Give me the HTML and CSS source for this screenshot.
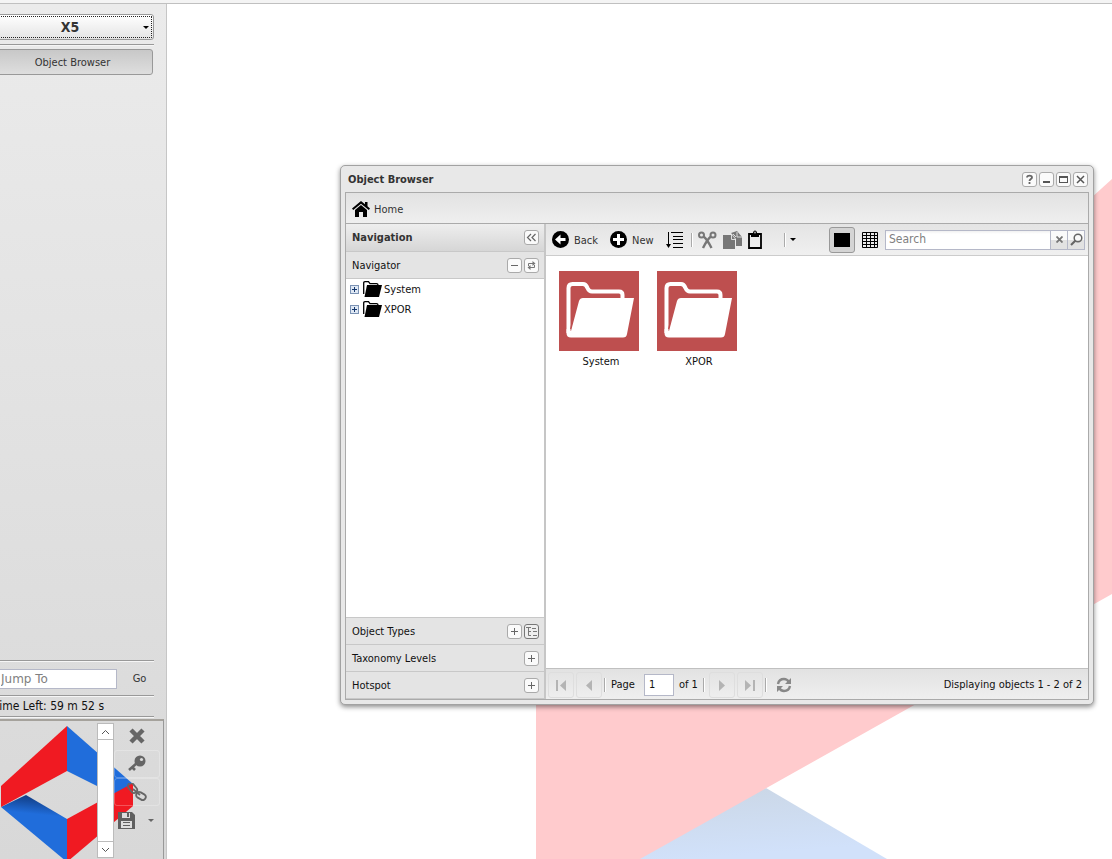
FILE: index.html
```html
<!DOCTYPE html>
<html lang="en">
<head>
<meta charset="utf-8">
<title>Object Browser</title>
<link rel="stylesheet" href="styles.css">
</head>
<body>
<div class="app">
  <header class="topstrip"></header>
  <div class="workspace">
    <aside class="sidebar">
      <button class="combo" type="button"><span class="combo-label">X5</span><span class="caret"></span></button>
      <hr class="rule">
      <button class="task" type="button">Object Browser</button>
      <div class="spacer"></div>
      <hr class="rule">
      <form class="jump">
        <input class="jump-input" type="text" placeholder="Jump To" aria-label="Jump To">
        <button class="go" type="button">Go</button>
      </form>
      <hr class="rule">
      <p class="time">Time Left: 59 m 52 s</p>
      <hr class="rule">
      <section class="dock">
        <svg class="logo" viewBox="-8 0 105 138" width="105" height="138">
          <defs><linearGradient id="fold" x1="0.2" y1="0" x2="0.1" y2="1"><stop offset="0" stop-color="#123f88"/><stop offset=".25" stop-color="#206ddb"/></linearGradient></defs>
          <path fill="#206ddb" d="M67 5 133 63 115 74 67 50z"/>
          <path fill="#f01a22" d="M133 62V85L67 141V98z"/>
          <path fill="url(#fold)" d="M1 86 26 74 67 98V141z"/>
          <path fill="#f01a22" d="M67 5V50L1 86V65z"/>
        </svg>
        <div class="scroll">
          <button class="scroll-btn" type="button" aria-label="Scroll up"><svg width="9" height="6" viewBox="0 0 9 6"><path d="M1 5 4.500 1.500 8 5" fill="none" stroke="#555"/></svg></button>
          <div class="spacer"></div>
          <button class="scroll-btn scroll-down" type="button" aria-label="Scroll down"><svg width="9" height="6" viewBox="0 0 9 6"><path d="M1 1 4.500 4.500 8 1" fill="none" stroke="#555"/></svg></button>
        </div>
        <div class="dock-tools">
          <button class="dock-btn" type="button" aria-label="Close"><svg width="18" height="18" viewBox="0 0 18 18"><path d="M3 3 15 15M15 3 3 15" stroke="#666" stroke-width="4.500"/></svg></button>
          <button class="dock-btn outlined" type="button" aria-label="Key"><svg width="18" height="18" viewBox="0 0 18 18"><circle cx="12" cy="6" r="5.500" fill="#666"/><circle cx="13.500" cy="4.500" r="1.600" fill="#ddd"/><path d="M9 8 1 15M4 12l3 3" stroke="#666" stroke-width="2.600"/></svg></button>
          <button class="dock-btn outlined" type="button" aria-label="Link"><svg width="20" height="18" viewBox="0 0 20 18" fill="none" stroke="#666" stroke-width="1.800"><rect x="0" y="2" width="11" height="6" rx="3" transform="rotate(50 5.500 5)"/><rect x="9" y="10" width="10" height="6" rx="3" transform="rotate(30 14 13)"/><path d="M6 6l7 6"/></svg></button>
          <div class="save-row">
            <button class="save" type="button" aria-label="Save"><svg width="17" height="17" viewBox="0 0 17 17"><path fill="#5f5f5f" d="M0 0H14L17 3V17H0z"/><path fill="#ddd" d="M4 1H12V6H4zM3 9H14V16H3z"/><path fill="#5f5f5f" d="M9 1h2v4H9zM5 10h7v1H5zM5 13h7v1H5z"/></svg></button>
            <span class="caret caret-grey"></span>
          </div>
        </div>
      </section>
    </aside>
    <main class="desktop"></main>
  </div>

  <svg class="wallpaper" viewBox="0 0 1112 859" preserveAspectRatio="xMinYMin slice" aria-hidden="true">
    <defs><linearGradient id="sky" x1="0" y1="0" x2=".3" y2="1"><stop offset="0" stop-color="#cad6e4"/><stop offset="1" stop-color="#d1e1fa"/></linearGradient></defs>
    <path fill="url(#sky)" d="M766 788 887 859H600z"/>
    <path fill="#ffcbcd" d="M536 859V700L1112 179V594L640 859z"/>
  </svg>

  <section class="window" aria-label="Object Browser">
    <header class="titlebar">
      <h1 class="title">Object Browser</h1>
      <button class="tool" type="button" aria-label="Help"><svg width="13" height="13" viewBox="0 0 13 13"><path d="M4 4.500C4 2 9 2 9 4.500 9 6 6.500 6 6.500 8M6.500 9v2" fill="none" stroke="#666" stroke-width="1.800"/></svg></button>
      <button class="tool" type="button" aria-label="Minimize"><svg width="13" height="13" viewBox="0 0 13 13"><path d="M3 8H10V10H3z" fill="#555"/></svg></button>
      <button class="tool" type="button" aria-label="Maximize"><svg width="13" height="13" viewBox="0 0 13 13"><path d="M2 3H11V10H2zM3 5V9H10V5z" fill="#555" fill-rule="evenodd"/></svg></button>
      <button class="tool" type="button" aria-label="Close"><svg width="13" height="13" viewBox="0 0 13 13"><path d="M3 3 10 10M10 3 3 10" stroke="#555" stroke-width="1.500"/></svg></button>
    </header>
    <div class="frame">
      <nav class="homebar">
        <button class="bar-btn" type="button"><svg width="18" height="16" viewBox="0 0 18 16"><path d="M9 0 0 7.500 1.200 9 9 2.800 16.800 9 18 7.500 15.500 5.300V1H13V3.300z"/><path d="M9 4 3 9V16H7V11H11V16H15V9z"/></svg><span>Home</span></button>
      </nav>
      <div class="columns">
        <aside class="nav">
          <header class="nav-head"><h2 class="nav-title">Navigation</h2>
            <button class="tool" type="button" aria-label="Collapse"><svg width="13" height="13" viewBox="0 0 13 13"><path d="M6 3 2.500 6.500 6 10M10.500 3 7 6.500 10.500 10" fill="none" stroke="#666" stroke-width="1.200"/></svg></button></header>
          <div class="section"><span class="section-name">Navigator</span>
            <button class="tool" type="button" aria-label="Collapse section"><svg width="13" height="13" viewBox="0 0 13 13"><path d="M3 6H10V7H3z" fill="#666"/></svg></button>
            <button class="tool" type="button" aria-label="Refresh"><svg width="13" height="13" viewBox="0 0 13 13"><path d="M3.500 7V4.500H9M9.500 6V8.500H4" fill="none" stroke="#777"/><path d="M7.500 2 10.500 4.500 7.500 7zM5.500 6 2.500 8.500 5.500 11z" fill="#777"/></svg></button></div>
          <ul class="tree">
            <li class="node"><button class="expander" type="button" aria-label="Expand System"></button>
              <svg width="19" height="16" viewBox="0 0 19 16"><path d="M.700 13V2Q.700 .700 2 .700H5.500L7 2.700H13.500Q15 2.700 15 4" fill="none" stroke="#000" stroke-width="1.300"/><path d="M4 4H19L16 16H1.500z"/></svg><span>System</span></li>
            <li class="node"><button class="expander" type="button" aria-label="Expand XPOR"></button>
              <svg width="19" height="16" viewBox="0 0 19 16"><path d="M.700 13V2Q.700 .700 2 .700H5.500L7 2.700H13.500Q15 2.700 15 4" fill="none" stroke="#000" stroke-width="1.300"/><path d="M4 4H19L16 16H1.500z"/></svg><span>XPOR</span></li>
          </ul>
          <div class="section"><span class="section-name">Object Types</span>
            <button class="tool" type="button" aria-label="Expand Object Types"><svg width="13" height="13" viewBox="0 0 13 13"><path d="M3 6H6V3H7V6H10V7H7V10H6V7H3z" fill="#666"/></svg></button>
            <button class="tool tool-dark" type="button" aria-label="Tree view"><svg width="13" height="13" viewBox="0 0 13 13"><path d="M1 2.500H6M3.500 2.500V10.500M3.500 6.500H6M3.500 10.500H6M7 3.500H11M8 6.500H12M8 10.500H12" fill="none" stroke="#777"/></svg></button></div>
          <div class="section"><span class="section-name">Taxonomy Levels</span>
            <button class="tool" type="button" aria-label="Expand Taxonomy Levels"><svg width="13" height="13" viewBox="0 0 13 13"><path d="M3 6H6V3H7V6H10V7H7V10H6V7H3z" fill="#666"/></svg></button></div>
          <div class="section"><span class="section-name">Hotspot</span>
            <button class="tool" type="button" aria-label="Expand Hotspot"><svg width="13" height="13" viewBox="0 0 13 13"><path d="M3 6H6V3H7V6H10V7H7V10H6V7H3z" fill="#666"/></svg></button></div>
        </aside>
        <div class="content">
          <div class="toolbar">
            <div class="actions">
              <button class="bar-btn" type="button"><svg width="17" height="17" viewBox="0 0 17 17"><circle cx="8.500" cy="8.500" r="8.500"/><path fill="#fff" d="M3 8.500 8.500 3.500V7H13.500V10H8.500V13.500z"/></svg><span>Back</span></button>
              <button class="bar-btn" type="button"><svg width="17" height="17" viewBox="0 0 17 17"><circle cx="8.500" cy="8.500" r="8.500"/><path fill="#fff" d="M7 3H10V7H14V10H10V14H7V10H3V7H7z"/></svg><span>New</span></button>
              <button class="bar-btn" type="button" aria-label="Sort"><svg width="17" height="18" viewBox="0 0 17 18"><path d="M2 1H3V13H5L2.500 17 0 13H2zM5 1H17V2H5zM7 5H17V6H7zM7 8H17V9H7zM7 12H17V13H7zM7 16H17V17H7z"/></svg></button>
            </div>
            <span class="sep"></span>
            <div class="clip">
              <button class="bar-btn" type="button" aria-label="Cut"><svg width="19" height="18" viewBox="0 0 19 18" fill="none" stroke="#777" stroke-width="2"><ellipse cx="3.500" cy="4" rx="2.500" ry="2.500"/><ellipse cx="15" cy="4" rx="2.500" ry="2.500"/><path d="M5.500 5.500Q9 8 13.500 17M13 5.500Q9.500 8 5 17" stroke-width="2.400"/></svg></button>
              <button class="bar-btn" type="button" aria-label="Copy"><svg width="19" height="18" viewBox="0 0 19 18"><path fill="#777" d="M0 4H9L12 8V18H0z"/><path fill="#777" d="M8 2 14 0 19 6V15H13V8L9 3z"/><path d="M8.500 4V8.500H12M14 1V6H19M10 3l3 3" fill="none" stroke="#ddd"/></svg></button>
              <button class="bar-btn" type="button" aria-label="Paste"><svg width="14" height="19" viewBox="0 0 14 19"><path d="M1 4H13V18H1z" fill="none" stroke="#000" stroke-width="1.800"/><path d="M3 3H5C5-.500 9-.500 9 3H11V7H3z"/><circle cx="7" cy="2.500" r="1" fill="#aaa"/></svg></button>
            </div>
            <span class="sep"></span>
            <span class="caret"></span>
            <div class="spacer"></div>
            <button class="view view-on" type="button" aria-label="Icon view"><svg width="16" height="14" viewBox="0 0 16 14"><path d="M0 0H16V14H0z"/></svg></button>
            <button class="view" type="button" aria-label="Table view"><svg width="16" height="16" viewBox="0 0 16 16"><path d="M.500.500H15.500V15.500H.500zM0 3.500H16M0 6.500H16M0 9.500H16M0 12.500H16M4.500 0V16M8.500 0V16M12.500 0V16" fill="none" stroke="#000"/></svg></button>
            <form class="search">
              <input class="search-input" type="text" placeholder="Search" aria-label="Search">
              <button class="search-btn" type="button" aria-label="Clear"><svg width="7" height="7" viewBox="0 0 7 7"><path d="M.500 .500 6.500 6.500M6.500 .500 .500 6.500" stroke="#777" stroke-width="1.800"/></svg></button>
              <button class="search-btn" type="button" aria-label="Search objects"><svg width="13" height="13" viewBox="0 0 13 13"><circle cx="8" cy="5" r="3.800" fill="none" stroke="#666" stroke-width="1.500"/><path d="M5.500 7.500 1 12" stroke="#666" stroke-width="2.200"/></svg></button>
            </form>
          </div>
          <div class="items">
            <figure class="item"><svg width="80" height="80" viewBox="0 0 80 80"><path fill="#be4f4f" d="M0 0H80V80H0z"/><path d="M9.500 62V17Q9.500 13 13.500 13H24Q27 13 28.500 17 30 20.500 33 20.500H60Q63.500 20.500 63.500 24V28" fill="none" stroke="#fff" stroke-width="4"/><path d="M12 60 20 30Q21 27 24 27H75L68 63Q67.500 66.500 64 66.500H12Q7.500 66.500 7.500 62V58z" fill="#fff"/><path d="M11.500 58 19 27" stroke="#be4f4f"/></svg><figcaption>System</figcaption></figure>
            <figure class="item"><svg width="80" height="80" viewBox="0 0 80 80"><path fill="#be4f4f" d="M0 0H80V80H0z"/><path d="M9.500 62V17Q9.500 13 13.500 13H24Q27 13 28.500 17 30 20.500 33 20.500H60Q63.500 20.500 63.500 24V28" fill="none" stroke="#fff" stroke-width="4"/><path d="M12 60 20 30Q21 27 24 27H75L68 63Q67.500 66.500 64 66.500H12Q7.500 66.500 7.500 62V58z" fill="#fff"/><path d="M11.500 58 19 27" stroke="#be4f4f"/></svg><figcaption>XPOR</figcaption></figure>
          </div>
          <footer class="pager">
            <button class="page-btn" type="button" aria-label="First page"><svg width="12" height="12" viewBox="0 0 12 12"><path fill="#b4b4b4" d="M1 1H3V12H1zM11 1V12L5 6.500z"/></svg></button>
            <button class="page-btn" type="button" aria-label="Previous page"><svg width="12" height="12" viewBox="0 0 12 12"><path fill="#b4b4b4" d="M9 1V12L3 6.500z"/></svg></button>
            <span class="sep"></span>
            <label class="page-label" for="page">Page</label>
            <input class="page-input" id="page" type="text" value="1">
            <span class="page-of">of 1</span>
            <span class="sep"></span>
            <button class="page-btn" type="button" aria-label="Next page"><svg width="12" height="12" viewBox="0 0 12 12"><path fill="#b4b4b4" d="M3 1V12L9 6.500z"/></svg></button>
            <button class="page-btn" type="button" aria-label="Last page"><svg width="12" height="12" viewBox="0 0 12 12"><path fill="#b4b4b4" d="M9 1H11V12H9zM1 1V12L7 6.500z"/></svg></button>
            <span class="sep"></span>
            <button class="page-btn reload" type="button" aria-label="Reload"><svg width="16" height="16" viewBox="0 0 16 16"><path d="M2 7Q3 2 8 2 11 2 13 5M14 9Q13 14 8 14 5 14 3 11" fill="none" stroke="#888" stroke-width="2.400"/><path fill="#888" d="M15 1V7H9zM1 15V9H7z"/></svg></button>
            <div class="spacer"></div>
            <span>Displaying objects 1 - 2 of 2</span>
          </footer>
        </div>
      </div>
    </div>
  </section>
</div>
</body>
</html>
```

FILE: styles.css
```css
* { box-sizing: border-box; }
body {
  margin: 0;
  font: 11px/15px Tahoma, "DejaVu Sans Condensed", "Noto Sans", sans-serif;
  color: #111;
}
button, input { font: inherit; color: inherit; margin: 0; }
button { display: flex; align-items: center; justify-content: center; padding: 0; border: 0; background: none; }
h1, h2, p, ul, figure, hr { margin: 0; padding: 0; }
h1, h2 { font-size: 11px; line-height: 15px; color: #333; flex: 1; }
svg { display: block; flex: none; }
input::placeholder { color: #808080; opacity: 1; }
.spacer { flex: 1; }
.app { position: relative; display: flex; flex-direction: column; height: 100vh; overflow: hidden; background: #fff; }
.topstrip { height: 4px; flex: none; background: #f4f4f4; border-bottom: 1px solid #c0c0c0; }
.workspace { flex: 1; display: flex; min-height: 0; }
.desktop { flex: 1; }

.sidebar {
  width: 175px; margin-left: -8px; padding-top: 10px; flex: none;
  display: flex; flex-direction: column;
  background: linear-gradient(#ebebeb, #d8d8d8);
  border-right: 1px solid #c6c6c6;
}
.combo {
  height: 26px; margin-right: 12px; padding: 1px 4px 0; flex: none;
  border: 1px solid #999; border-radius: 3px;
  outline: 1px dotted #222; outline-offset: -3px;
  background: linear-gradient(#fff, #e4e4e4);
}
.combo-label { flex: 1; font-size: 14px; font-weight: bold; color: #333; }
.caret { border: 3px solid transparent; border-top-color: #000; border-bottom: 0; flex: none; }
.caret-grey { border-top-color: #666; }
.rule { height: 2px; margin-right: 12px; border: 0; border-top: 1px solid #999; background: #f6f6f6; flex: none; }
.combo + .rule { margin-top: 4px; }
.task {
  height: 26px; margin: 3px 13px 0 0; padding-top: 1px; flex: none; color: #333;
  border: 1px solid #999; border-radius: 3px;
  background: linear-gradient(#c8c8c8, #dedede);
}
.jump { display: flex; align-items: center; height: 33px; flex: none; }
.jump-input { width: 125px; height: 20px; padding: 0 8px; font: 12px "DejaVu Sans", sans-serif; border: 1px solid #b5b8c8; background: #fff; }
.go { flex: 1; margin-right: 4px; color: #333; }
.time { height: 19px; font-size: 12px; line-height: 19px; padding-left: 1px; flex: none; white-space: nowrap; }
.dock {
  display: flex; height: 140px; margin: 1px 2px 0 0; flex: none;
  border-top: 2px solid #a5a29c; border-right: 1px solid #999;
}
.logo { overflow: visible; }
.scroll { width: 17px; margin: 2px 0 0; height: 135px; display: flex; flex-direction: column; background: #fff; border: 1px solid #bbb; z-index: 1; }
.scroll-btn { height: 16px; border-bottom: 1px solid #bbb; }
.scroll-down { border-bottom: 0; border-top: 1px solid #bbb; }
.dock-tools { flex: 1; z-index: 1; padding-top: 1px; display: flex; flex-direction: column; }
.dock-btn { height: 28px; }
.dock-btn, .save-row { width: 46px; }
.outlined { border: 1px solid rgba(255, 255, 255, .25); border-radius: 3px; }
.save-row { display: flex; align-items: center; justify-content: space-between; height: 28px; padding: 0 6px 0 4px; }

.wallpaper { position: absolute; inset: 0; width: 100%; height: 100%; pointer-events: none; }

.window {
  position: absolute; left: 340px; top: 165px; right: 18px; bottom: 154px;
  display: flex; flex-direction: column; padding: 0 4px 4px;
  background: #e8e8e8; border: 1px solid #a2a2a2; border-radius: 5px;
  box-shadow: 0 2px 5px rgba(0, 0, 0, .45);
}
.titlebar { display: flex; align-items: center; gap: 2px; height: 26px; padding: 0 1px 0 3px; flex: none; }
.tool {
  width: 15px; height: 15px; flex: none;
  background: #fafafa; border: 1px solid #aaa; border-radius: 3px;
}
.tool-dark { border-color: #777; background: #eee; }
.frame { flex: 1; min-height: 0; display: flex; flex-direction: column; border: 1px solid #aaa; }
.homebar { display: flex; align-items: center; height: 31px; flex: none; padding: 1px 6px 0; border-bottom: 1px solid #aaa; background: linear-gradient(#e2e2e2, #efefef); }
.bar-btn { gap: 5px; color: #333; }
.bar-btn span { padding-top: 1px; }
.homebar .bar-btn { gap: 4px; }
.columns { flex: 1; display: flex; min-height: 0; }
.nav { width: 200px; flex: none; display: flex; flex-direction: column; border-right: 2px solid #c6c6c6; }
.nav-head, .section { display: flex; align-items: center; gap: 2px; height: 27px; padding: 0 5px 0 6px; flex: none; border-bottom: 1px solid #c8c8c8; background: #e4e4e4; }
.nav-head { height: 28px; background: linear-gradient(#eee, #d6d6d6); }
.section-name { flex: 1; }
.tree { flex: 1; list-style: none; border-bottom: 1px solid #c8c8c8; background: #fff; }
.node { display: flex; align-items: center; height: 20px; padding-left: 4px; }
.node svg { margin: 0 2px 0 4px; }
.expander {
  width: 9px; height: 9px; flex: none; border: 1px solid #7b92b4;
  background:
    linear-gradient(#14376d, #14376d) center / 5px 1px no-repeat,
    linear-gradient(#14376d, #14376d) center / 1px 5px no-repeat,
    #dfe8f4;
}
.content { flex: 1; display: flex; flex-direction: column; min-width: 0; background: #fff; }
.toolbar { display: flex; align-items: center; height: 32px; flex: none; padding: 0 3px 0 6px; border-bottom: 1px solid #ccc; background: linear-gradient(#e4e4e4, #f0f0f0); }
.actions { display: flex; align-items: center; gap: 12px; margin-right: 8px; }
.sep { width: 2px; height: 14px; flex: none; background: #fff; border-left: 1px solid #aaa; }
.clip { display: flex; align-items: center; gap: 6px; margin: 0 22px 0 5px; }
.toolbar .caret { margin-left: 4px; }
.view { width: 26px; height: 26px; flex: none; border: 1px solid transparent; border-radius: 3px; }
.view + .view { margin: 0 2px; }
.view-on { background: #d4d4d4; border-color: #999; }
.search { display: flex; height: 20px; border: 1px solid #b5b8c8; background: #fff; }
.search-input { width: 164px; border: 0; padding: 0 3px; font-size: 12px; background: linear-gradient(#f1f1f1, #fff 3px); }
.search-btn { width: 17px; border-left: 1px solid #b5b8c8; background: linear-gradient(#fafafa 50%, #e2e2e2 50%); }
.items { flex: 1; display: flex; align-items: flex-start; gap: 18px; padding: 15px 13px; }
.item { width: 80px; text-align: center; }
.item figcaption { padding: 3px 0 0 4px; }
.pager { display: flex; align-items: center; height: 31px; flex: none; padding: 1px 6px 0 2px; border-top: 1px solid #c0c0c0; background: linear-gradient(#e2e2e2, #efefef); }
.page-btn { width: 26px; height: 26px; margin-right: 2px; border: 1px solid #dedede; border-radius: 3px; }
.reload { border-color: transparent; }
.pager .sep { margin-right: 4px; }
.page-label { margin: 0 9px 0 1px; }
.page-input { width: 30px; height: 22px; padding: 0 4px; border: 1px solid #b5b8c8; background: #fff; }
.page-of { margin: 0 5px; }
```
